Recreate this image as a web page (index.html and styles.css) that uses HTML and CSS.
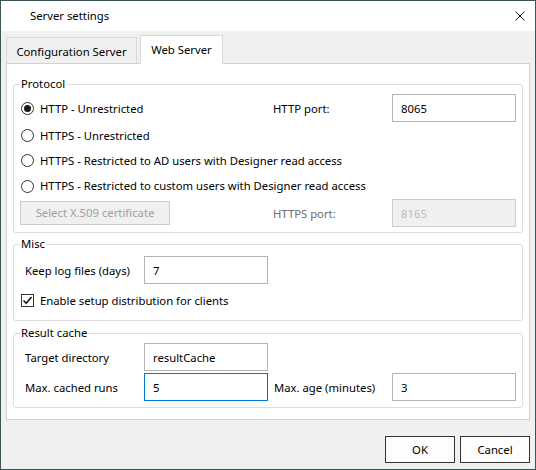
FILE: index.html
```html
<!DOCTYPE html>
<html>
<head>
<meta charset="utf-8">
<title>Server settings</title>
<link rel="stylesheet" href="styles.css">
</head>
<body>
<div class="window">
  <div class="titlebar">
    <span class="title">Server settings</span>
    <svg class="close" width="10" height="10" viewBox="0 0 10 10"><path d="M0.5 0.5L9.5 9.5M9.5 0.5L0.5 9.5" stroke="#111" stroke-width="1" fill="none"/></svg>
  </div>
  <div class="client">
    <div class="tabs">
      <div class="tab">Configuration Server</div>
      <div class="tab active">Web Server</div>
    </div>
    <div class="panel">
      <fieldset class="group protocol">
        <legend>Protocol</legend>
        <div class="pgrid">
          <label class="radio"><span class="rb checked"></span>HTTP - Unrestricted</label>
          <span class="lbl">HTTP port:</span>
          <input class="tb" type="text" value="8065">
          <label class="radio wide"><span class="rb"></span>HTTPS - Unrestricted</label>
          <label class="radio wide"><span class="rb"></span>HTTPS - Restricted to AD users with Designer read access</label>
          <label class="radio wide"><span class="rb"></span>HTTPS - Restricted to custom users with Designer read access</label>
          <button class="btn-disabled" type="button">Select X.509 certificate</button>
          <span class="lbl dim">HTTPS port:</span>
          <input class="tb disabled" type="text" value="8165" disabled>
        </div>
      </fieldset>
      <fieldset class="group misc">
        <legend>Misc</legend>
        <div class="mgrid">
          <span class="lbl indent">Keep log files (days)</span>
          <input class="tb" type="text" value="7">
          <label class="check wide"><span class="cb"><svg width="11" height="11" viewBox="0 0 11 11"><path d="M1.5 5.5L4.2 8.3L9.5 2" stroke="#1a1a1a" stroke-width="1.6" fill="none"/></svg></span>Enable setup distribution for clients</label>
        </div>
      </fieldset>
      <fieldset class="group cache">
        <legend>Result cache</legend>
        <div class="cgrid">
          <span class="lbl indent">Target directory</span>
          <input class="tb" type="text" value="resultCache">
          <span></span><span></span>
          <span class="lbl indent">Max. cached runs</span>
          <input class="tb focus" type="text" value="5">
          <span class="lbl indent2">Max. age (minutes)</span>
          <input class="tb" type="text" value="3">
        </div>
      </fieldset>
    </div>
    <div class="footer">
      <button class="btn" type="button">OK</button>
      <button class="btn" type="button">Cancel</button>
    </div>
  </div>
</div>
</body>
</html>
```

FILE: styles.css
```css
html, body {
  margin: 0;
  padding: 0;
  background: #f0f0f0;
}

body {
  font-family: "Noto Sans", "Open Sans", sans-serif;
  font-size: 11.3px;
  line-height: 16px;
  color: #000;
}

.window {
  width: 536px;
  height: 470px;
  box-sizing: border-box;
  border: 1px solid #3b5553;
  background: #f0f0f0;
  display: flex;
  flex-direction: column;
}

.titlebar {
  height: 30px;
  flex: none;
  background: #fff;
  display: flex;
  align-items: center;
  justify-content: space-between;
  padding: 0 10px 0 29px;
  box-sizing: border-box;
}

.title {
  color: #000;
}

.client {
  flex: 1;
  display: flex;
  flex-direction: column;
  padding: 0 5px;
}

.tabs {
  height: 33px;
  margin-bottom: -1px;
  display: flex;
  align-items: flex-end;
  position: relative;
  z-index: 1;
}

.tab {
  box-sizing: border-box;
  width: 131px;
  height: 26px;
  margin-bottom: 1px;
  border: 1px solid #d9d9d9;
  border-bottom: none;
  background: #f0f0f0;
  display: flex;
  align-items: center;
  justify-content: center;
  padding-top: 2px;
}

.tab.active {
  width: 83px;
  height: 29px;
  margin-left: 3px;
  margin-bottom: 0;
  background: #fff;
  padding-top: 1px;
  padding-bottom: 1px;
}

.panel {
  background: #fff;
  border: 1px solid #d2d2d2;
  padding: 12px 6px 11px 6px;
  display: flex;
  flex-direction: column;
}

.group {
  margin: 0;
  border: 1px solid #dcdcdc;
  border-radius: 3px;
  padding: 2px 6px 5px 6px;
  min-width: 0;
}

.group legend {
  padding: 0 1px;
  line-height: 16px;
}

.misc {
  margin-top: 3px;
  padding-top: 4px;
  padding-bottom: 4px;
}

.cache {
  margin-top: 4px;
  padding-top: 2px;
  padding-bottom: 6px;
}

.pgrid {
  display: grid;
  grid-template-columns: 253px 119px 124px;
  grid-template-rows: 28px 26px 24px 27px 28px;
  align-items: center;
}

.mgrid {
  display: grid;
  grid-template-columns: 124px 124px 248px;
  grid-template-rows: 28px 32px;
  align-items: center;
}

.cgrid {
  display: grid;
  grid-template-columns: 124px 124px 124px 124px;
  grid-template-rows: 28px 28px;
  row-gap: 2px;
  align-items: center;
}

.wide {
  grid-column: 1 / -1;
}

.radio, .check {
  display: flex;
  align-items: center;
  white-space: nowrap;
  padding-top: 1px;
}

.rb {
  box-sizing: border-box;
  width: 13px;
  height: 13px;
  border: 1px solid #333;
  border-radius: 50%;
  margin: 0 6px 0 1px;
  display: flex;
  align-items: center;
  justify-content: center;
  background: #fff;
}

.rb.checked::after {
  content: "";
  width: 7px;
  height: 7px;
  border-radius: 50%;
  background: #1a1a1a;
}

.cb {
  box-sizing: border-box;
  width: 13px;
  height: 13px;
  border: 1px solid #333;
  margin: 0 6px 0 1px;
  display: flex;
  align-items: center;
  justify-content: center;
  background: #fff;
}

.lbl {
  white-space: nowrap;
  padding-top: 1px;
}

.lbl.dim {
  color: #6d6d6d;
}

.indent {
  padding-left: 5px;
}

.indent2 {
  padding-left: 6px;
}

.tb {
  box-sizing: border-box;
  width: 124px;
  height: 28px;
  margin: 0;
  border: 1px solid #b4b4b4;
  background: #fff;
  padding: 1px 7px 0 8px;
  font: inherit;
  color: #000;
  outline: none;
}

.tb.disabled {
  background: #f0f0f0;
  border-color: #cdcdcd;
  color: #bcbcbc;
}

.tb.focus {
  border-color: #0078d7;
}

.btn-disabled {
  box-sizing: border-box;
  width: 150px;
  height: 24px;
  margin: 0;
  border: 1px solid #cccccc;
  background: #f0f0f0;
  color: #a0a0a0;
  font: inherit;
  padding: 0;
}

.footer {
  display: flex;
  justify-content: flex-end;
  gap: 5px;
  margin-top: 16px;
}

.btn {
  box-sizing: border-box;
  width: 70px;
  height: 27px;
  margin: 0;
  border: 1px solid #333;
  background: #fdfdfd;
  color: #000;
  font: inherit;
  padding: 0;
}
```
